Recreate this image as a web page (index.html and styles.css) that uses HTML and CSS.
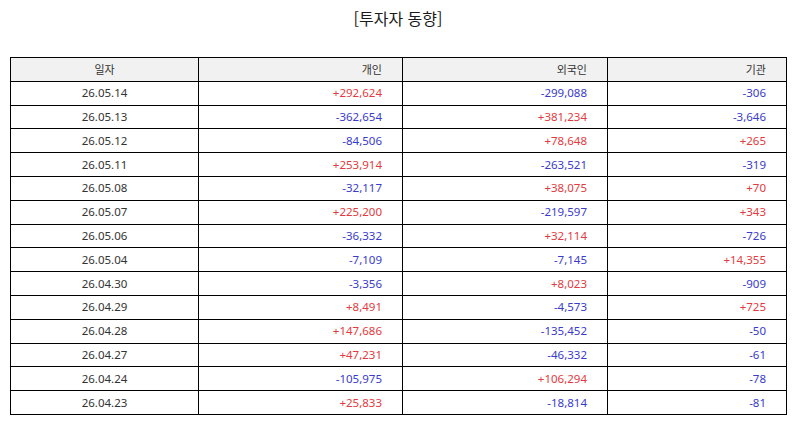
FILE: index.html
```html
<!DOCTYPE html>
<html lang="ko">
<head>
<meta charset="utf-8">
<title>투자자 동향</title>
<link rel="stylesheet" href="styles.css">
</head>
<body>
<div class="page">
  <h1 class="title">[투자자 동향]</h1>
  <table class="grid">
    <colgroup>
      <col class="c-date"><col class="c-ind"><col class="c-for"><col class="c-ins">
    </colgroup>
    <thead>
      <tr><th class="center">일자</th><th>개인</th><th>외국인</th><th>기관</th></tr>
    </thead>
    <tbody>
      <tr><td class="center">26.05.14</td><td class="up">+292,624</td><td class="down">-299,088</td><td class="down">-306</td></tr>
      <tr><td class="center">26.05.13</td><td class="down">-362,654</td><td class="up">+381,234</td><td class="down">-3,646</td></tr>
      <tr><td class="center">26.05.12</td><td class="down">-84,506</td><td class="up">+78,648</td><td class="up">+265</td></tr>
      <tr><td class="center">26.05.11</td><td class="up">+253,914</td><td class="down">-263,521</td><td class="down">-319</td></tr>
      <tr><td class="center">26.05.08</td><td class="down">-32,117</td><td class="up">+38,075</td><td class="up">+70</td></tr>
      <tr><td class="center">26.05.07</td><td class="up">+225,200</td><td class="down">-219,597</td><td class="up">+343</td></tr>
      <tr><td class="center">26.05.06</td><td class="down">-36,332</td><td class="up">+32,114</td><td class="down">-726</td></tr>
      <tr><td class="center">26.05.04</td><td class="down">-7,109</td><td class="down">-7,145</td><td class="up">+14,355</td></tr>
      <tr><td class="center">26.04.30</td><td class="down">-3,356</td><td class="up">+8,023</td><td class="down">-909</td></tr>
      <tr><td class="center">26.04.29</td><td class="up">+8,491</td><td class="down">-4,573</td><td class="up">+725</td></tr>
      <tr><td class="center">26.04.28</td><td class="up">+147,686</td><td class="down">-135,452</td><td class="down">-50</td></tr>
      <tr><td class="center">26.04.27</td><td class="up">+47,231</td><td class="down">-46,332</td><td class="down">-61</td></tr>
      <tr><td class="center">26.04.24</td><td class="down">-105,975</td><td class="up">+106,294</td><td class="down">-78</td></tr>
      <tr><td class="center">26.04.23</td><td class="up">+25,833</td><td class="down">-18,814</td><td class="down">-81</td></tr>
    </tbody>
  </table>
</div>
</body>
</html>
```

FILE: styles.css
```css
html, body {
  margin: 0;
  padding: 0;
  background: #ffffff;
}

.page {
  padding: 8px 8px 0 10px;
  font-family: "Noto Sans", "Noto Sans CJK KR", sans-serif;
  color: #333333;
}

.title {
  margin: 0;
  font-family: "Noto Sans CJK KR", sans-serif;
  font-size: 16px;
  line-height: 20px;
  font-weight: 400;
  text-align: center;
  color: #1a1a1a;
}

.grid {
  margin-top: 29px;
  border-collapse: collapse;
  table-layout: fixed;
  width: 776px;
  font-size: 11.5px;
}

.c-date { width: 188px; }
.c-ind { width: 204px; }
.c-for { width: 205px; }
.c-ins { width: 179px; }

.grid th,
.grid td {
  border: 1px solid #000000;
  height: 22.8px;
  padding: 0 20px 0 0;
  text-align: right;
  font-weight: 400;
  line-height: 14px;
  vertical-align: middle;
  color: #333333;
}

.grid th {
  background: #f1f1f1;
  font-family: "Noto Sans CJK KR", sans-serif;
  font-size: 11px;
}

.grid .center {
  text-align: center;
  padding: 0;
}

.grid .up { color: #e23a40; }
.grid .down { color: #3a3acb; }
```
